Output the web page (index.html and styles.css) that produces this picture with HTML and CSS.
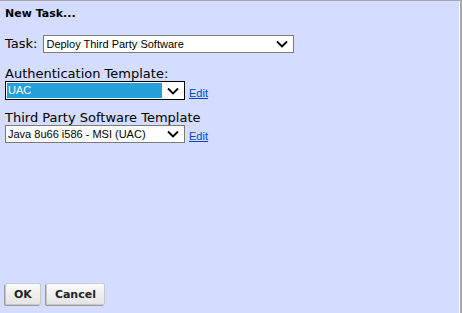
FILE: index.html
```html
<!DOCTYPE html>
<html lang="en">
<head>
    <meta charset="UTF-8">
    <title>New Task</title>
    <link rel="stylesheet" href="styles.css">
</head>
<body>
    <div class="panel">
        <div class="title">New Task...</div>

        <div class="task-row">
            <span class="label">Task:</span>
            <div class="select wide">
                <span class="value">Deploy Third Party Software</span>
                <svg class="chevron" width="12" height="8" viewBox="0 0 12 8"><path d="M1 1.5 L6 6.5 L11 1.5" fill="none" stroke="#000" stroke-width="1.8"/></svg>
            </div>
        </div>

        <div class="field auth">
            <div class="label">Authentication Template:</div>
            <div class="field-row">
                <div class="select narrow focused">
                    <span class="value selected">UAC</span>
                    <svg class="chevron" width="12" height="8" viewBox="0 0 12 8"><path d="M1 1.5 L6 6.5 L11 1.5" fill="none" stroke="#000" stroke-width="1.8"/></svg>
                </div>
                <a href="#" class="edit">Edit</a>
            </div>
        </div>

        <div class="field software">
            <div class="label">Third Party Software Template</div>
            <div class="field-row">
                <div class="select narrow">
                    <span class="value">Java 8u66 i586 - MSI (UAC)</span>
                    <svg class="chevron" width="12" height="8" viewBox="0 0 12 8"><path d="M1 1.5 L6 6.5 L11 1.5" fill="none" stroke="#000" stroke-width="1.8"/></svg>
                </div>
                <a href="#" class="edit">Edit</a>
            </div>
        </div>

        <div class="buttons">
            <button class="btn">OK</button>
            <button class="btn">Cancel</button>
        </div>
    </div>
</body>
</html>
```

FILE: styles.css
```css
body {
    margin: 0;
    background-color: #d4dcff;
    font-family: "DejaVu Sans", Verdana, sans-serif;
}
.panel {
    height: 313px;
    box-sizing: border-box;
    border-top: 1px solid #a8a8a8;
    border-right: 2px solid #a8a8a8;
    box-shadow: inset -1px 0 #fff;
    padding: 0 5px;
    display: flex;
    flex-direction: column;
}
.title {
    font-size: 11px;
    font-weight: bold;
    line-height: 13px;
    margin-top: 6px;
    color: #000;
}
.label {
    font-size: 13px;
    line-height: 14px;
    color: #000;
}
.task-row {
    display: flex;
    align-items: center;
    gap: 6px;
    margin-top: 15px;
}
.field.auth {
    margin-top: 14px;
}
.field.software {
    margin-top: 11px;
}
.field-row {
    display: flex;
    align-items: flex-end;
    gap: 4px;
}
.select {
    display: flex;
    align-items: center;
    box-sizing: border-box;
    height: 18px;
    background-color: #fff;
    border: 1px solid #7a7a7a;
    font-family: "Liberation Sans", Arial, sans-serif;
    font-size: 11px;
    color: #000;
}
.select.wide {
    width: 251px;
}
.select.narrow {
    width: 180px;
}
.select.focused {
    border-color: #000;
    height: 19px;
}
.value {
    flex: 1;
    padding-left: 2px;
    line-height: 15px;
    white-space: nowrap;
    overflow: hidden;
}
.value.selected {
    background-color: #26a0da;
    color: #fff;
    margin: 1px 0 1px 1px;
    padding-left: 1px;
}
.chevron {
    margin: 0 5px;
}
.edit {
    font-family: "Liberation Sans", Arial, sans-serif;
    font-size: 11px;
    color: #0044cc;
    text-decoration: underline;
    line-height: 13px;
}
.buttons {
    margin-top: auto;
    margin-bottom: 8px;
    display: flex;
    gap: 5px;
}
.btn {
    font-family: "DejaVu Sans", Verdana, sans-serif;
    font-size: 11px;
    font-weight: bold;
    color: #222;
    height: 22px;
    padding: 0 8px;
    border: 1px solid #c8c8c8;
    border-radius: 2px;
    background: linear-gradient(#fafafa, #e4e4e4);
    box-shadow: -1px 1px 0 #9a9a9a;
}
```
